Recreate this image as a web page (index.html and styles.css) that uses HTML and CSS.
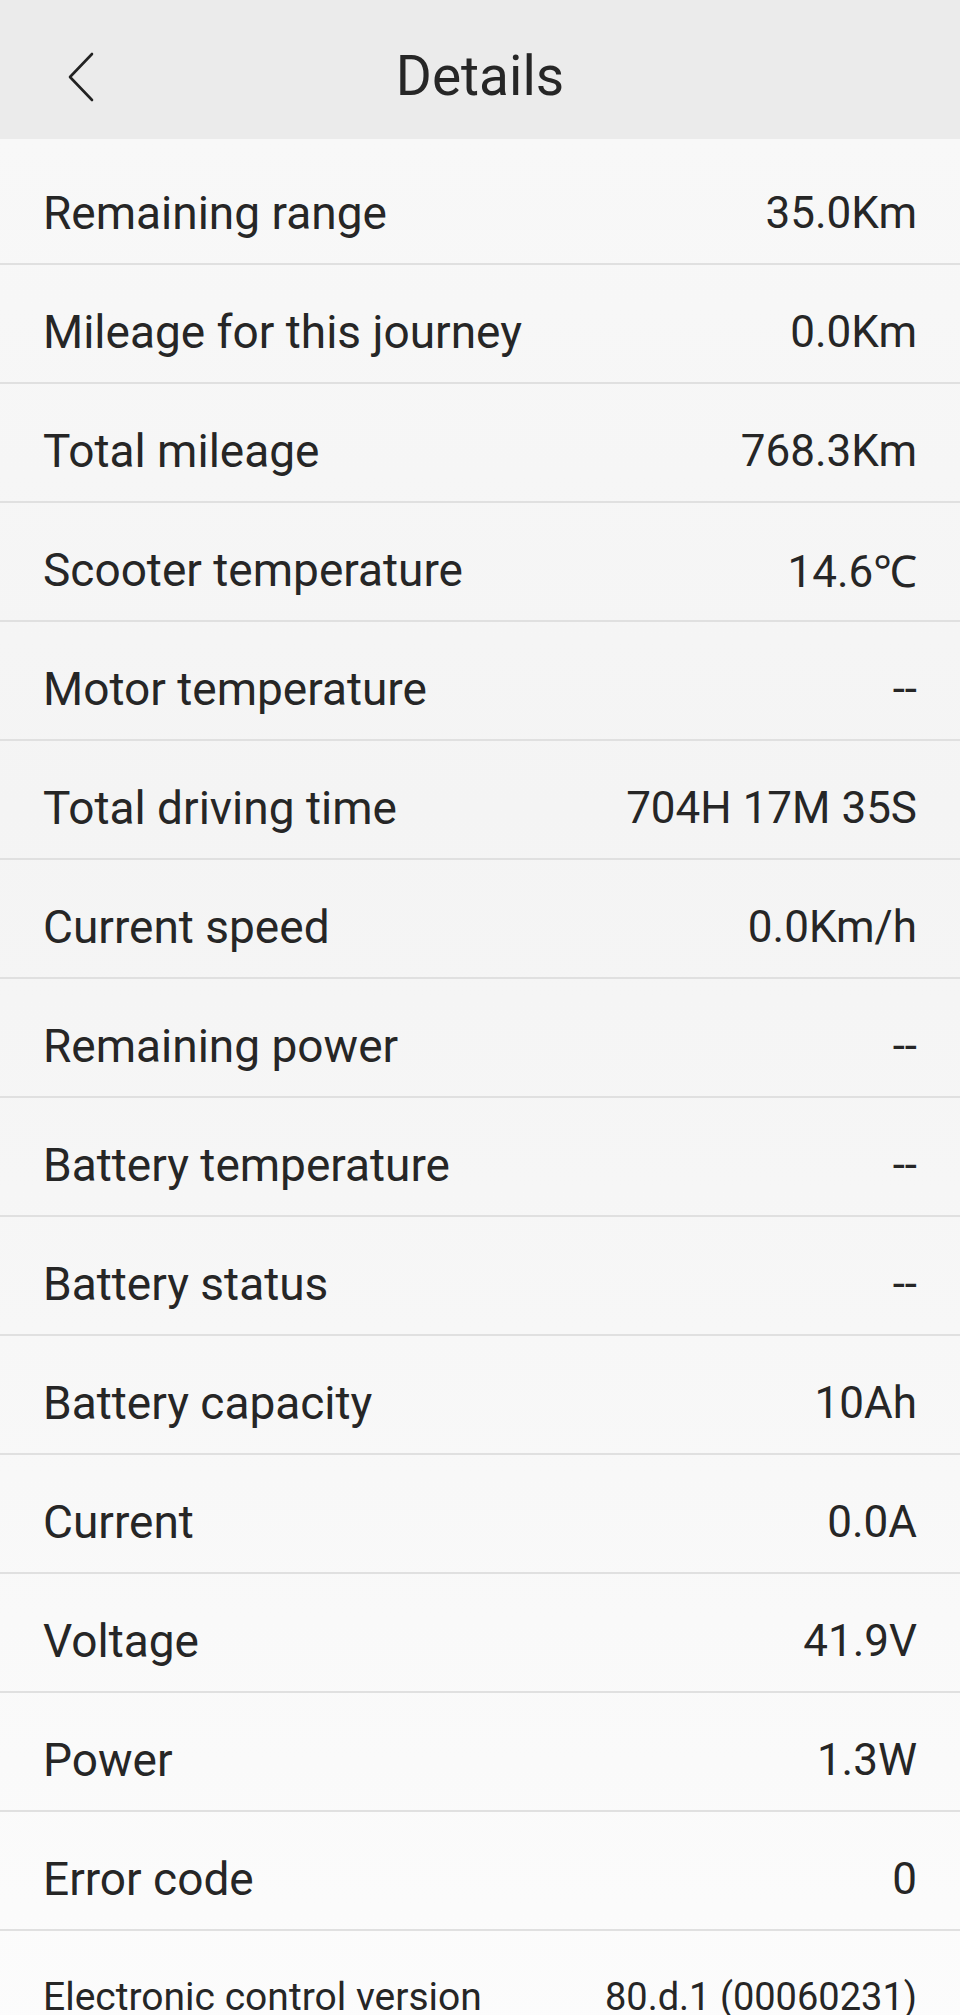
FILE: index.html
```html
<!DOCTYPE html>
<html lang="en">

<head>
    <meta charset="UTF-8">
    <meta name="viewport" content="width=device-width, initial-scale=1.0">
    <title>Details</title>
    <link rel="stylesheet" href="styles.css">
</head>

<body>
    <div id="topBar">
        <div class="backBtn">
            <svg width="28" height="50" viewBox="0 0 28 50">
                <polyline points="24,2 2,25 24,48" fill="none" stroke="#222" stroke-width="2.6" stroke-linecap="round" stroke-linejoin="round" />
            </svg>
        </div>
        <div class="title">Details</div>
        <div></div>
    </div>
    <div id="detailList">
        <div class="row"><span class="label">Remaining range</span><span class="value">35.0Km</span></div>
        <div class="row"><span class="label">Mileage for this journey</span><span class="value">0.0Km</span></div>
        <div class="row"><span class="label">Total mileage</span><span class="value">768.3Km</span></div>
        <div class="row"><span class="label">Scooter temperature</span><span class="value">14.6℃</span></div>
        <div class="row"><span class="label">Motor temperature</span><span class="value">--</span></div>
        <div class="row"><span class="label">Total driving time</span><span class="value">704H 17M 35S</span></div>
        <div class="row"><span class="label">Current speed</span><span class="value">0.0Km/h</span></div>
        <div class="row"><span class="label">Remaining power</span><span class="value">--</span></div>
        <div class="row"><span class="label">Battery temperature</span><span class="value">--</span></div>
        <div class="row"><span class="label">Battery status</span><span class="value">--</span></div>
        <div class="row"><span class="label">Battery capacity</span><span class="value">10Ah</span></div>
        <div class="row"><span class="label">Current</span><span class="value">0.0A</span></div>
        <div class="row"><span class="label">Voltage</span><span class="value">41.9V</span></div>
        <div class="row"><span class="label">Power</span><span class="value">1.3W</span></div>
        <div class="row"><span class="label">Error code</span><span class="value">0</span></div>
        <div class="row small"><span class="label">Electronic control version</span><span class="value">80.d.1 (00060231)</span></div>
    </div>
</body>

</html>
```

FILE: styles.css
```css
html,
body {
    margin: 0;
    padding: 0;
}

body {
    width: 960px;
    height: 2015px;
    overflow: hidden;
    font-family: Roboto, "Noto Sans", sans-serif;
    color: #262626;
    background-color: #fbfbfb;
}

#topBar {
    height: 139px;
    box-sizing: border-box;
    padding-top: 14px;
    display: grid;
    grid-template-columns: 1fr auto 1fr;
    align-items: center;
    background-color: #ebebeb;
}

.backBtn {
    padding-left: 68px;
    display: flex;
    align-items: center;
}

.backBtn svg {
    display: block;
}

.title {
    font-size: 55px;
    line-height: 1;
}

#detailList {
    padding-top: 7px;
    background: linear-gradient(to bottom, #f8f8f8 0%, #f4f4f4 35%, #f6f6f6 55%, #fcfcfc 100%);
}

.row {
    height: 119px;
    box-sizing: border-box;
    padding: 16px 43px 0 43px;
    display: flex;
    justify-content: space-between;
    align-items: center;
    border-bottom: 2px solid #e0e0e0;
    font-size: 46px;
}

.row .value {
    font-size: 44px;
}

.row.small {
    font-size: 39px;
    padding-top: 12px;
    border-bottom: none;
}

.row.small .value {
    font-size: 38px;
}
```
